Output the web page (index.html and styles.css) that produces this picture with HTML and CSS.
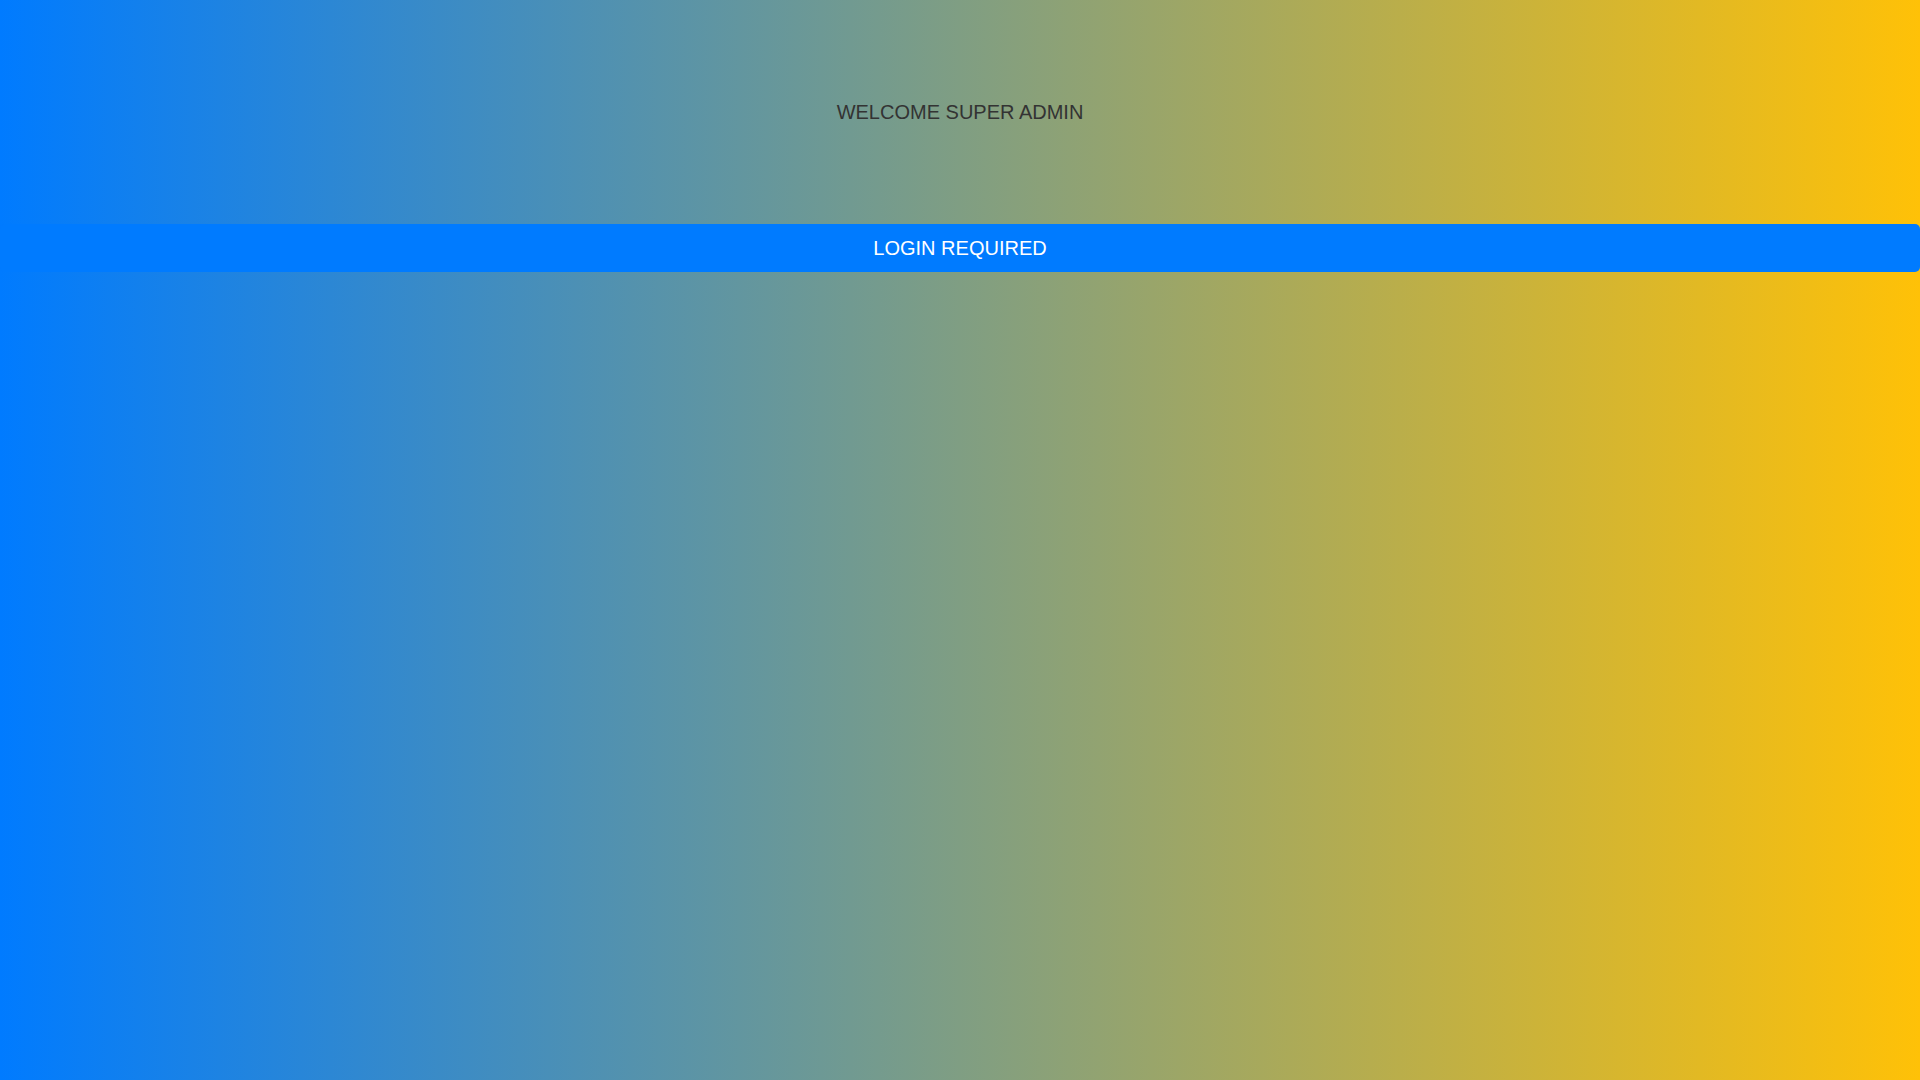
FILE: index.html
```html
<!DOCTYPE html>
<html lang="en">
<head>
<meta charset="utf-8">
<title>Welcome</title>
<link rel="stylesheet" href="styles.css">
</head>
<body>
<main class="page">
  <h1 class="welcome">WELCOME SUPER ADMIN</h1>
  <div class="login-bar">LOGIN REQUIRED</div>
</main>
</body>
</html>
```
FILE: styles.css
```css
html, body {
  margin: 0;
  padding: 0;
  height: 100%;
}
body {
  background: linear-gradient(to right, #007bff, #ffc107);
  font-family: "Liberation Sans", Arial, sans-serif;
}
.page {
  display: flex;
  flex-direction: column;
  padding-top: 100px;
}
.welcome {
  margin: 0;
  font-size: 20px;
  line-height: 24px;
  font-weight: normal;
  text-align: center;
  color: #333;
}
.login-bar {
  margin-top: 100px;
  height: 48px;
  line-height: 48px;
  background: #007bff;
  color: #fff;
  font-size: 20px;
  text-align: center;
  border-radius: 5px;
}
```
